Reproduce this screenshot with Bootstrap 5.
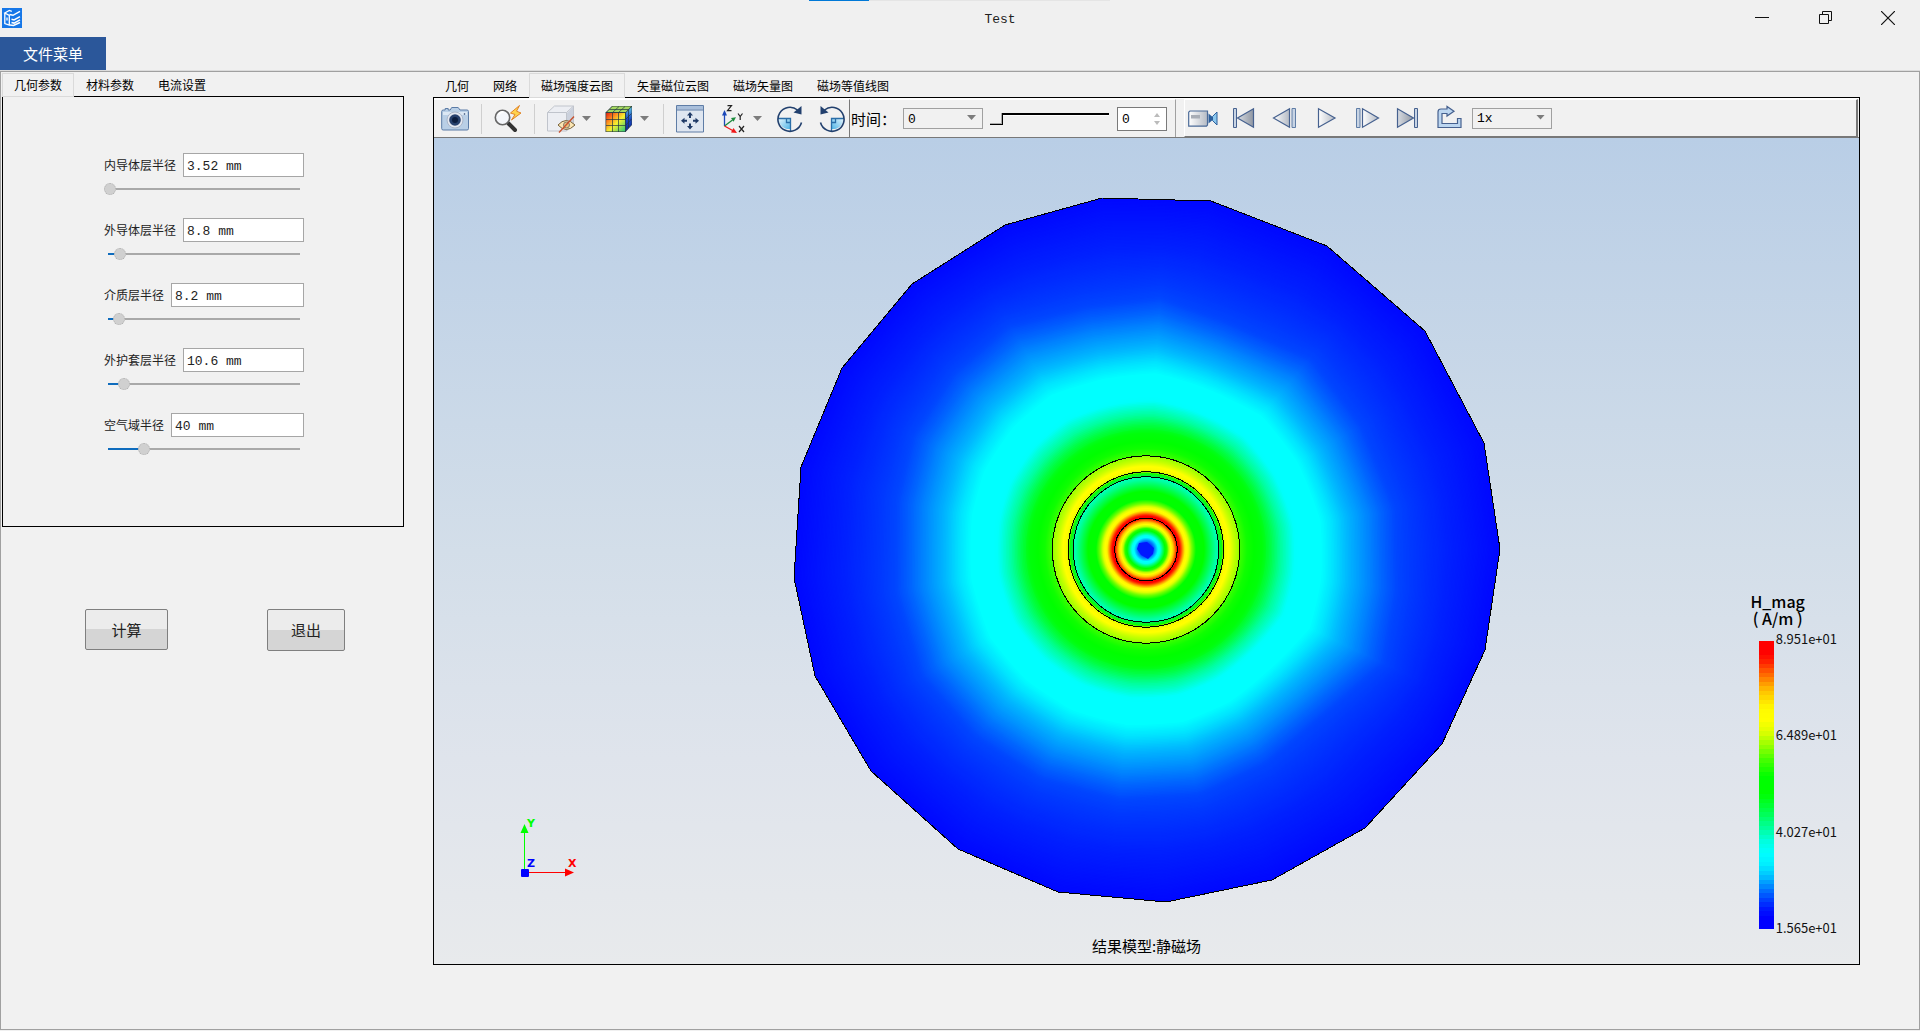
<!DOCTYPE html>
<html lang="zh-CN">
<head>
<meta charset="utf-8">
<meta name="viewport" content="width=device-width, initial-scale=1">
<title>Test</title>
<link href="https://cdn.jsdelivr.net/npm/bootstrap@5.3.0/dist/css/bootstrap.min.css" rel="stylesheet">
<style>
  :root { --ui: "Noto Sans CJK SC", sans-serif; --mono: "Liberation Mono", "Noto Sans CJK SC", monospace; }
  body { font: 12px/16px var(--ui); color: #000; background: #f0f0f0; }
  button { font: inherit; color: inherit; padding: 0; border: 0; background: none; }

  .titlebar { height: 37px; padding-left: 2px; }
  .loadbar { top: 0; left: 42.15%; width: 301px; height: 1px; background: linear-gradient(90deg, #0078d7 60px, #e5e5e5 60px); }
  .app-title { font: 13px/16px var(--mono); color: #222; padding: 12px 0 0 248px; }
  .win-btn { width: 63px; height: 36px; }
  .win-btns { padding-right: 1px; }
  .file-menu { width: 106px; height: 33px; background: #2b579a; color: #fff; font-size: 15px; line-height: 22px; }

  .workspace { border: 1px solid #a0a0a0; background: #f1f1f1; box-shadow: 0 -1px #dcdcdc; margin-top: 1px; margin-bottom: 1px; }
  .side { width: 404px; padding: 1px 1px 0; flex: none; }
  .results { margin: 1px 59px 64px 28px; min-width: 0; }

  .tabs { height: 24px; }
  .tabs .tab { padding: 0 12px; height: 25px; position: relative; }
  .side .tabs { height: 23px; }
  .side .tabs .tab { height: 24px; }
  .tabs .tab.active { z-index: 1; background: #f1f1f1; box-shadow: inset 0 0 0 1px #dadada; }
  .pane { border: 1px solid #000; }
  .params { padding: 56px 0 71px 2px; }
  .param-list { width: 200px; margin: auto; gap: 23px; }
  .param-box { height: 24px; min-width: 0; border: 1px solid #a6a6a6; border-radius: 0; background: #fff; font: 13px/16px var(--mono); color: #222; padding: 2px 3px 0; }
  .param-name { color: #222; margin-right: 7px; white-space: nowrap; }

  .param-slider { display: block; appearance: none; width: 196px; height: 12px; margin-top: 6px;
    background: linear-gradient(90deg, transparent 4px, #0f6cbd 4px, #0f6cbd var(--v), #a9a9a9 var(--v)) 0 5px / 100% 2px no-repeat; }
  .param-slider::-webkit-slider-thumb { appearance: none; width: 12px; height: 12px; border-radius: 50%; background: #d0d0d0; border: 1px dotted #b0b0b0; }

  .actions { margin: 82px 0 0 83px; gap: 99px; }
  .act { width: 83px; height: 41px; border: 1px solid #7f7f7f; border-radius: 2px; color: #222; font-size: 15px; line-height: 22px;
    background: linear-gradient(#ececec 50%, #d5d5d5 50%); }
  .act-exit { width: 78px; height: 42px; }

  .toolbar { height: 40px; background: #f1f1f1; border-top: 1px solid #fff; border-bottom: 1px solid #787878; }
  .tool-group { height: 100%; border-top: 1px solid #fff; }
  .tool-view { padding: 0 3px 0 7px; border-right: 1px solid #787878; }
  .tool-time { padding: 0 8px 0 1px; gap: 7px; border-right: 1px solid #a0a0a0; font-size: 15px; }
  .tool-play { margin: 0 1px 0 8px; padding-left: 3px; gap: 11px; border-left: 1px solid #fff; border-right: 2px solid #787878; border-bottom: 1px solid #787878; }
  .tool-play .pick { margin-left: -3px; }
  .tool { width: 28px; height: 28px; flex: none; }
  .tool-play .tool { width: 30px; }
  .tool svg, .win-btn svg { display: block; margin: auto; }
  .rule { width: 1px; height: 30px; margin: 0 12px; background: #cfcfcf; flex: none; }
  .drop { width: 9px; height: 28px; margin: 0 14px 0 7px; flex: none; }
  .drop::after, .pick::after { content: ""; display: block; width: 9px; height: 5px; background: #7c7c7c; clip-path: polygon(0 0, 100% 0, 50% 100%); }
  .drop + .rule { margin-left: 0; }
  .axes-tool, .turn-tool { margin-left: 14px; }
  .drop + .turn-tool { margin-left: 0; }
  .pick { width: 80px; height: 21px; position: relative; flex: none; }
  .pick select { appearance: none; width: 100%; height: 100%; border: 1px solid #a0a0a0; border-radius: 0; background: #f1f1f1; padding: 2px 4px 0; font: 13px/16px var(--mono); color: #000; }
  .pick::after { position: absolute; right: 7px; top: 7px; pointer-events: none; }
  .time-slider { appearance: none; width: 120px; height: 12px; background: linear-gradient(#000 2px, #fff 2px, #fff 3px, transparent 3px) 12px 0 / 107px 100% no-repeat; }
  .time-slider::-webkit-slider-thumb { appearance: none; width: 13px; height: 12px; background: #f1f1f1; border: solid #000; border-width: 0 1px 1px 0; box-shadow: inset -1px -1px #aaa; }
  .spin { width: 50px; height: 24px; position: relative; }
  .spin input { width: 100%; height: 100%; border: 1px solid #7a7a7a; border-radius: 0; background: #fff; padding: 2px 4px 0; font: 13px/16px var(--mono); }
  .spin svg { right: 7px; top: 6px; pointer-events: none; }

  .viewer { background: linear-gradient(#b9cee6, #d3dee9 50%, #dfe4ec 75%, #e8eaec); min-height: 600px; }
  .scene { inset: 0; width: 100%; height: 100%; }
  .caption { left: 0; right: 0; bottom: 7px; font-size: 15px; line-height: 22px; text-align: center; }
  .legend { right: 22px; bottom: 27px; }
  .legend-title { font-size: 16px; line-height: 17px; font-weight: 500; width: 64px; text-align: center; margin-left: -13px; padding-bottom: 4px; white-space: pre; }
  .legend-bar { width: 15px; height: 288px; margin: 10px 0 8px; }
  .legend-ticks { font-size: 13px; line-height: 16px; height: 306px; padding: 0 0 1px 2px; color: #111; }
</style>
</head>
<body class="vh-100 d-flex flex-column overflow-hidden">

<header class="titlebar d-flex align-items-start position-relative">
  <div class="loadbar position-absolute"></div>
  <svg width="20" height="20" viewBox="0 0 20 20" class="mt-2" aria-hidden="true">
    <rect width="20" height="20" fill="#1677e8"/>
    <path d="M2.800 5v10.500l4.500 1.500V7.500L2.800 5l4.500-2.500 2.500.800M5 9.500v3" fill="none" stroke="#fff" stroke-width="1.300"/>
    <path d="M7.500 6.500l3.500.800 7-4M9.500 11.300l2.500.600 6-3.200M9.500 14.500l2.500.600 6-3.200M8 17l3.500.500 6.500-3" fill="none" stroke="#fff" stroke-width="1.500"/>
  </svg>
  <div class="app-title flex-fill text-center">Test</div>
  <div class="win-btns d-flex">
    <button class="win-btn" aria-label="最小化"><svg width="14" height="14" viewBox="0 0 14 14"><path d="M0 6.500h14" stroke="#111" stroke-width="1"/></svg></button>
    <button class="win-btn" aria-label="还原"><svg width="14" height="14" viewBox="0 0 14 14"><path d="M1.500 3.500h9v9h-9zM4.500 3.500v-3h9v9h-3" fill="none" stroke="#111"/></svg></button>
    <button class="win-btn" aria-label="关闭"><svg width="14" height="14" viewBox="0 0 14 14"><path d="M0 0l14 14M14 0L0 14" stroke="#111" stroke-width="1.200"/></svg></button>
  </div>
</header>
<nav><button class="file-menu d-block">文件菜单</button></nav>

<main class="workspace d-flex flex-fill">
  <section class="side">
    <div class="tabs d-flex" role="tablist">
      <button class="tab active" role="tab">几何参数</button><button class="tab" role="tab">材料参数</button><button class="tab" role="tab">电流设置</button>
    </div>
    <div class="pane params">
      <div class="param-list d-flex flex-column">
        <div><div class="d-flex align-items-center"><label class="param-name" for="p1">内导体层半径</label><input class="param-box flex-fill" id="p1" size="1" value="3.52 mm"></div>
          <input type="range" class="param-slider" aria-label="内导体层半径" min="0" max="184" value="0" style="--v:6px"></div>
        <div><div class="d-flex align-items-center"><label class="param-name" for="p2">外导体层半径</label><input class="param-box flex-fill" id="p2" size="1" value="8.8 mm"></div>
          <input type="range" class="param-slider" aria-label="外导体层半径" min="0" max="184" value="10" style="--v:16px"></div>
        <div><div class="d-flex align-items-center"><label class="param-name" for="p3">介质层半径</label><input class="param-box flex-fill" id="p3" size="1" value="8.2 mm"></div>
          <input type="range" class="param-slider" aria-label="介质层半径" min="0" max="184" value="9" style="--v:15px"></div>
        <div><div class="d-flex align-items-center"><label class="param-name" for="p4">外护套层半径</label><input class="param-box flex-fill" id="p4" size="1" value="10.6 mm"></div>
          <input type="range" class="param-slider" aria-label="外护套层半径" min="0" max="184" value="14" style="--v:20px"></div>
        <div><div class="d-flex align-items-center"><label class="param-name" for="p5">空气域半径</label><input class="param-box flex-fill" id="p5" size="1" value="40 mm"></div>
          <input type="range" class="param-slider" aria-label="空气域半径" min="0" max="184" value="34" style="--v:40px"></div>
      </div>
    </div>
    <div class="actions d-flex">
      <button class="act">计算</button><button class="act act-exit">退出</button>
    </div>
  </section>

  <section class="results flex-fill d-flex flex-column">
    <div class="tabs d-flex" role="tablist">
      <button class="tab" role="tab">几何</button><button class="tab" role="tab">网络</button><button class="tab active" role="tab">磁场强度云图</button><button class="tab" role="tab">矢量磁位云图</button><button class="tab" role="tab">磁场矢量图</button><button class="tab" role="tab">磁场等值线图</button>
    </div>
    <div class="pane flex-fill d-flex flex-column">
      <svg width="0" height="0" class="position-absolute" aria-hidden="true"><defs>
        <linearGradient id="gl" x1="0" x2="1"><stop offset="0" stop-color="#fff"/><stop offset="1" stop-color="#b4bac4"/></linearGradient>
        <linearGradient id="gr" x1="0" x2="1"><stop offset="0" stop-color="#d8dce2"/><stop offset="1" stop-color="#8f96a2"/></linearGradient>
        <linearGradient id="gb" x1="0" y1="0" x2="1" y2="1"><stop offset="0" stop-color="#e4f5fd"/><stop offset="1" stop-color="#4fb4e6"/></linearGradient>
        <linearGradient id="gc" x1="0" y1="0" x2="1" y2="1"><stop offset="0" stop-color="#e02010"/><stop offset=".3" stop-color="#ff9020"/><stop offset=".55" stop-color="#f4f030"/><stop offset="1" stop-color="#28c878"/></linearGradient>
        <linearGradient id="gd" x1="0" y1="0" x2="0" y2="1"><stop offset="0" stop-color="#60c8e8"/><stop offset=".5" stop-color="#1848c8"/><stop offset="1" stop-color="#102890"/></linearGradient>
      </defs></svg>
      <div class="toolbar d-flex" role="toolbar">
        <div class="tool-group tool-view d-flex align-items-center">
          <button class="tool" aria-label="截图"><svg width="28" height="28" viewBox="0 0 28 28"><path d="M.7 6.500q0-1.500 1.500-1.500h2V3.500h3V5h2l1.500-2.500h6.500L19 5h7q1.500 0 1.500 1.500v17q0 1.500-1.500 1.500H2.200q-1.500 0-1.500-1.500z" fill="#b9cfe6" stroke="#5b7ba6"/><path d="M2 7h24v3H2z" fill="#dce8f4"/><circle cx="14" cy="15" r="8" fill="#e4e8f0" stroke="#aab6ca"/><circle cx="14" cy="15" r="5.800" fill="#27406c"/><circle cx="14" cy="15" r="3" fill="#0c1d3e"/><circle cx="23.500" cy="9" r=".8" fill="#27406c"/></svg></button>
          <i class="rule"></i>
          <button class="tool" aria-label="快速缩放"><svg width="28" height="28" viewBox="0 0 28 28"><path d="M14.500 18.500l6.500 6.500" stroke="#333" stroke-width="4" stroke-linecap="round"/><circle cx="8.500" cy="12.500" r="7.200" fill="#f4f6fa" stroke="#666" stroke-width="1.600"/><path d="M4.500 10a5 5 0 0 1 5-3" fill="none" stroke="#fff" stroke-width="2"/><path d="M25.500.500l-9 7.500 4.500 1.500-3.500 5.500 9.500-7-4.500-1.800z" fill="#ffd34d" stroke="#e08428"/></svg></button>
          <i class="rule"></i>
          <button class="tool" aria-label="隐藏面"><svg width="28" height="28" viewBox="0 0 28 28"><path d="M.5 7.500l7-6.500h19v18l-7 7H.5z" fill="#eceef3" stroke="#c0c4cc"/><path d="M20 8l6-6v17l-6 6z" fill="#cbd1dd"/><path d="M.5 7.500h19L26.500 1M19.500 7.500V26" fill="none" stroke="#c0c4cc"/><path d="M11 20q8-9 17 0-9 9-17 0z" fill="#fbe6b4" stroke="#77613a" stroke-width="1"/><circle cx="19.500" cy="20" r="3" fill="#e8c27c" stroke="#666" stroke-width=".8"/><path d="M12 27.500L27 11.500" stroke="#c8502c" stroke-width="1.300"/></svg></button>
          <button class="drop" aria-label="显示选项"></button>
          <button class="tool" aria-label="云图"><svg width="28" height="28" viewBox="0 0 28 28"><path d="M.5 7.500L7 1h20v19l-6.500 7H.5z" fill="#344"/><path d="M1.200 8h19v18.400h-19z" fill="url(#gc)"/><path d="M1.800 7.200l5.700-5.600H26l-5.500 5.600z" fill="#a4d860"/><path d="M20.800 8L26.600 2v17.700l-5.800 6.300z" fill="url(#gd)"/><path d="M1 14.500h19.500l6-6M1 20.500h19.500l6-6.500M7.500 27V7.500L14 1.500M13.500 27V7.500l6.500-6M4.500 4.500h19V23M20.500 7.500V27M1 7.500h19.500" fill="none" stroke="#234" stroke-width=".7"/></svg></button>
          <button class="drop" aria-label="云图选项"></button>
          <i class="rule"></i>
          <button class="tool" aria-label="适合窗口"><svg width="28" height="28" viewBox="0 0 28 28"><path d="M.5.500h27v26.500H.5z" fill="#dfe6f0" stroke="#5f7da6"/><path d="M1 1h26v3.500H1z" fill="#a9bfdb"/><path d="M1 5h26" stroke="#5f7da6"/><path d="M14 7l3 3.500h-2V13h-2v-2.500h-2zM14 24.500l3-3.500h-2v-2.500h-2V21h-2zM5 15.700l3.500-3v2H11v2H8.500v2zM23 15.700l-3.500-3v2H17v2h2.500v2z" fill="#203a66"/></svg></button>
          <button class="tool axes-tool" aria-label="视图方向"><svg width="28" height="28" viewBox="0 0 28 28"><g fill="none" stroke-width="1.300"><path d="M6.500 21V9" stroke="#1c48b8"/><path d="M6.500 21l8-6" stroke="#1b8a3c"/><path d="M6.500 21l9 5" stroke="#f01818"/></g><path d="M4 10.500l2.500-5.500L9 10.500z" fill="#1c48b8"/><path d="M13 13l5-.8-2.500 4.600z" fill="#1b8a3c"/><path d="M19 28l-6-.5 2.500-4.500z" fill="#f01818"/><path d="M9.500.700h4l-4 5h4M20 8.500l2.200 3L24.500 8.500M22.200 11.500v3.500M21 21l5 6M26 21l-5 6" fill="none" stroke="#222" stroke-width="1.200"/></svg></button>
          <button class="drop" aria-label="方向选项"></button>
          <button class="tool turn-tool" aria-label="顺时针旋转"><svg width="28" height="28" viewBox="0 0 28 28"><path d="M2.800 13.500h11.500v10.500A10 10 0 0 1 2.800 13.500z" fill="url(#gb)"/><path d="M2 13.500h12.500V26M10.500 13.500v4h4" fill="none" stroke="#2a6ea8" stroke-width="1.300"/><path d="M25.500 17.500A12 12 0 1 1 21.500 5" fill="none" stroke="#22406e" stroke-width="1.600"/><path d="M25.500 1v8.500l-8-2z" fill="#22406e"/></svg></button>
          <button class="tool turn-tool" aria-label="逆时针旋转"><svg width="28" height="28" viewBox="0 0 28 28"><g transform="matrix(-1 0 0 1 28 0)"><path d="M2.800 13.500h11.500v10.500A10 10 0 0 1 2.800 13.500z" fill="url(#gb)"/><path d="M2 13.500h12.500V26M10.500 13.500v4h4" fill="none" stroke="#2a6ea8" stroke-width="1.300"/><path d="M25.500 17.500A12 12 0 1 1 21.500 5" fill="none" stroke="#22406e" stroke-width="1.600"/><path d="M25.500 1v8.500l-8-2z" fill="#22406e"/></g></svg></button>
        </div>
        <div class="tool-group tool-time d-flex align-items-center">
          <label for="tsel">时间：</label>
          <div class="pick"><select id="tsel"><option>0</option></select></div>
          <input type="range" class="time-slider" aria-label="时间" value="0">
          <div class="spin"><input type="text" aria-label="时间步" value="0"><svg class="position-absolute" width="6" height="12" viewBox="0 0 6 12"><path d="M0 4l3-4 3 4zM0 8l3 4 3-4z" fill="#bbb"/></svg></div>
        </div>
        <div class="tool-group tool-play d-flex align-items-center flex-fill">
          <button class="tool" aria-label="录制"><svg width="30" height="28" viewBox="0 0 30 28"><path d="M.700 8.200l1.200-1.200h17.600v14l-1 1.200H.700z" fill="url(#gl)" stroke="#4a6a98" stroke-width="1.200"/><path d="M3 11h9v3.500H3z" fill="#a8adb6"/><path d="M20.500 9.500l3.500 3v4l-3.500 3z" fill="#2c5f9c"/><path d="M29 8v13l-4.500-4.500v-4z" fill="#8cc8ee" stroke="#2c5f9c"/></svg></button>
          <button class="tool" aria-label="首帧"><svg width="30" height="28" viewBox="0 0 30 28"><path d="M4.500 4.500h3v19h-3z" fill="#c8d4e4" stroke="#46618f"/><path d="M24.500 4.800v18.400L8.500 14z" fill="url(#gr)" stroke="#46618f" stroke-width="1.200"/></svg></button>
          <button class="tool" aria-label="上一帧"><svg width="30" height="28" viewBox="0 0 30 28"><path d="M19.500 4.800v18.400L3.500 14z" fill="url(#gl)" stroke="#46618f" stroke-width="1.200"/><path d="M22 4.500h3.500v19H22z" fill="#c8d4e4" stroke="#5f7da6"/></svg></button>
          <button class="tool" aria-label="播放"><svg width="30" height="28" viewBox="0 0 30 28"><path d="M7.500 4.800v18.400L24 14z" fill="url(#gl)" stroke="#46618f" stroke-width="1.200"/></svg></button>
          <button class="tool" aria-label="下一帧"><svg width="30" height="28" viewBox="0 0 30 28"><path d="M4.500 4.500H8v19H4.500z" fill="#c8d4e4" stroke="#5f7da6"/><path d="M10.500 4.800v18.400L26.500 14z" fill="url(#gl)" stroke="#46618f" stroke-width="1.200"/></svg></button>
          <button class="tool" aria-label="末帧"><svg width="30" height="28" viewBox="0 0 30 28"><path d="M4.500 4.800v18.400L20.500 14z" fill="url(#gr)" stroke="#46618f" stroke-width="1.200"/><path d="M21.500 4.500h3v19h-3z" fill="#c8d4e4" stroke="#46618f"/></svg></button>
          <button class="tool" aria-label="循环"><svg width="30" height="28" viewBox="0 0 30 28"><path d="M4 8q0-3 3-3h6V2.500l7 4.700-7 4.800V9.500H8V19.500h15.500V14.500h3.500V23.500H4z" fill="#bcd6f0" stroke="#46618f" stroke-width="1.200"/></svg></button>
          <div class="pick"><select aria-label="播放速度"><option>1x</option></select></div>
        </div>
      </div>

      <div class="viewer flex-fill position-relative">
        <svg class="scene position-absolute" id="scene" viewBox="434 138 1425 826" role="img" aria-label="磁场强度云图">
          <defs>
            <radialGradient id="core" gradientUnits="userSpaceOnUse" cx="1146" cy="549.5" r="120"></radialGradient>
          </defs>
          <g id="field"></g>
          <circle cx="1146" cy="549.5" r="120" fill="url(#core)"/>
          <path d="M1139 543l8-1 7 6-1 6-5 5-7-4-4-6z" fill="#0018ff"/>
          <g fill="none" stroke="#000" stroke-width="1" shape-rendering="crispEdges">
            <polygon id="rim"/>
            <circle cx="1146" cy="549.5" r="31.300"/><circle cx="1146" cy="549.5" r="72.700"/><circle cx="1146" cy="549.5" r="77.700"/><circle cx="1146" cy="549.5" r="93.700"/>
          </g>
          <path d="M524.500 872V830" stroke="#0f0"/><path d="M520.500 833h8l-4-9z" fill="#0f0"/>
          <path d="M525 872.500h45" stroke="red"/><path d="M565 868.500v8l9-4z" fill="red"/>
          <rect x="521" y="869" width="8" height="8" rx="1" fill="#00f"/>
          <g font-family="DejaVu Sans" font-weight="700" font-size="11"><text x="527" y="827" fill="#0f0">Y</text><text x="527" y="867" fill="#00f">Z</text><text x="568" y="867" fill="red">X</text></g>
        </svg>
        <div class="caption position-absolute">结果模型:静磁场</div>
        <div class="legend position-absolute">
          <div class="legend-title">H_mag
( A/m )</div>
          <div class="d-flex">
            <svg class="legend-bar" id="bar" viewBox="0 0 15 288" preserveAspectRatio="none" shape-rendering="crispEdges" aria-hidden="true"></svg>
            <div class="legend-ticks d-flex flex-column justify-content-between"><span>8.951e+01</span><span>6.489e+01</span><span>4.027e+01</span><span>1.565e+01</span></div>
          </div>
        </div>
      </div>
    </div>
  </section>
</main>

<script src="https://cdn.jsdelivr.net/npm/bootstrap@5.3.0/dist/js/bootstrap.bundle.min.js"></script>
<script>
  const NS = 'http://www.w3.org/2000/svg', CX = 1146, CY = 549.5;
  const add = (parent, tag, attrs) => { const e = document.createElementNS(NS, tag); for (const k in attrs) e.setAttribute(k, attrs[k]); parent.appendChild(e); };

  // piecewise-linear colour lookup over [position, r, g, b] stops
  function colour(stops, x) {
    let i = 1;
    while (i < stops.length - 1 && stops[i][0] < x) i++;
    const a = stops[i - 1], b = stops[i], t = Math.min(1, Math.max(0, (x - a[0]) / (b[0] - a[0])));
    return 'rgb(' + [1, 2, 3].map(k => Math.round(a[k] + (b[k] - a[k]) * t)) + ')';
  }

  // colour legend, 64 levels from maximum to minimum
  const levels = [[0,255,0,0],[.03,255,0,0],[.06,255,28,0],[.1,255,90,0],[.135,255,145,0],[.165,255,190,0],[.2,255,225,0],[.23,255,250,0],[.27,255,255,0],[.31,225,255,0],[.36,150,255,0],[.41,70,255,0],[.47,0,255,0],[.53,0,255,0],[.6,0,255,85],[.65,0,255,155],[.7,0,255,225],[.74,0,255,255],[.78,0,238,255],[.82,0,195,255],[.86,0,130,255],[.9,0,70,255],[.94,0,20,255],[.97,0,0,255],[1,0,0,255]];
  const bar = document.getElementById('bar');
  for (let i = 0; i < 64; i++) add(bar, 'rect', { x: 0, y: i * 4.5, width: 15, height: 4.6, fill: colour(levels, i / 63) });

  // conductor, dielectric and sheath: rotationally symmetric
  const inner = [[0,0,20,255],[6,0,50,255],[9,0,140,255],[12,0,255,255],[14,0,255,240],[17,0,255,90],[19,0,255,0],[21,40,255,0],[23,190,255,0],[25,255,255,0],[27,255,210,0],[29.5,255,90,0],[31,245,0,0],[33.5,255,0,0],[35,255,60,0],[37,255,160,0],[39,255,245,0],[41,255,255,0],[43,220,255,0],[46,110,255,0],[50,0,255,0],[58,0,255,0],[64,0,255,80],[70,0,255,165],[72.5,0,255,185],[73,0,240,70],[76,10,255,0],[77,120,240,0],[78,215,255,0],[80,255,250,0],[83,255,255,0],[88,200,255,0],[93.5,150,255,0],[94,60,255,0],[101,15,255,0],[108,0,255,0],[116,0,255,10],[120,0,255,30]];
  for (const s of inner) add(document.getElementById('core'), 'stop', { offset: s[0] / 120, 'stop-color': 'rgb(' + s.slice(1) + ')' });

  // air region: contours blend from a circle through the mesh ring to the outer rim
  const rimPts = [[1102,198],[1211,201],[1327,246],[1425,331],[1484,443],[1500,549],[1485,650],[1442,744],[1365,828],[1272,880],[1166,902],[1058,892],[958,849],[871,771],[815,676],[794,578],[801,467],[842,368],[912,284],[1005,225]];
  const midPts = [[1160,297],[1225,320],[1312,358],[1362,425],[1396,508],[1398,592],[1385,664],[1322,718],[1266,765],[1200,796],[1120,801],[1040,780],[974,737],[920,676],[895,592],[896,500],[912,435],[953,372],[1008,325],[1085,306]];
  document.getElementById('rim').setAttribute('points', rimPts.join(' '));
  function reach(poly, th) {
    const dx = Math.cos(th), dy = Math.sin(th);
    for (let i = 0; i < poly.length; i++) {
      const a = poly[i], b = poly[(i + 1) % poly.length];
      const ax = a[0] - CX, ay = a[1] - CY, ex = b[0] - a[0], ey = b[1] - a[1], d = dx * ey - dy * ex;
      const t = (ax * ey - ay * ex) / d, u = (ax * dy - ay * dx) / d;
      if (t > 0 && u >= 0 && u <= 1) return t;
    }
    return 0;
  }
  const N = 240, angles = Array.from({ length: N }, (_, i) => (i + .1) * 2 * Math.PI / N);
  const rimR = angles.map(a => reach(rimPts, a)), midR = angles.map(a => reach(midPts, a));
  const air = [[117,0,255,15],[124,0,255,60],[135,0,255,160],[148,0,255,250],[152,0,255,255],[174,0,255,255],[186,0,225,255],[200,0,182,255],[218,0,138,255],[233,0,100,255],[247,0,70,255],[265,0,55,255],[300,0,33,255],[353,0,8,255]];
  const field = document.getElementById('field');
  add(field, 'polygon', { points: rimPts.join(' '), fill: colour(air, 353) });
  for (let r = 351; r > 117; r -= 1.5) {
    const pts = angles.map((a, i) => {
      const R = r > 247 ? midR[i] + (rimR[i] - midR[i]) * (r - 247) / 106 : 117 + (midR[i] - 117) * (r - 117) / 130;
      return (CX + R * Math.cos(a)).toFixed(1) + ',' + (CY + R * Math.sin(a)).toFixed(1);
    });
    add(field, 'polygon', { points: pts.join(' '), fill: colour(air, r) });
  }
</script>
</body>
</html>
